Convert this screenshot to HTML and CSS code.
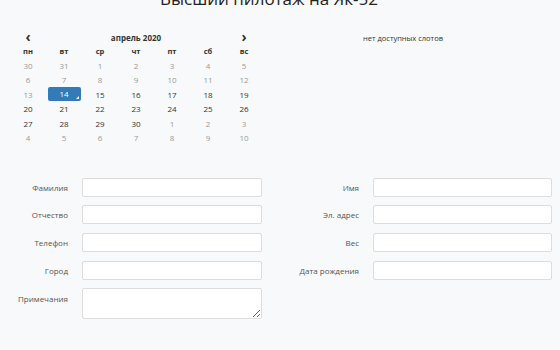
FILE: index.html
```html
<!DOCTYPE html>
<html lang="ru">
<head>
  <meta charset="UTF-8" />
  <title>Высший пилотаж на Як-52</title>
  <link rel="stylesheet" href="styles.css">
</head>
<body>
  <h1 class="title">Высший пилотаж на Як-52</h1>

  <div class="booking">
    <div class="calendar">
      <div class="cal-nav">
        <span class="cal-arrow">&#8249;</span>
        <span class="cal-month">апрель 2020</span>
        <span class="cal-arrow">&#8250;</span>
      </div>
      <div class="cal-grid">
        <span class="dow">пн</span><span class="dow">вт</span><span class="dow">ср</span><span class="dow">чт</span><span class="dow">пт</span><span class="dow">сб</span><span class="dow">вс</span>

        <span class="day off">30</span><span class="day off">31</span><span class="day off">1</span><span class="day off">2</span><span class="day off">3</span><span class="day off">4</span><span class="day off">5</span>
        <span class="day off">6</span><span class="day off">7</span><span class="day off">8</span><span class="day off">9</span><span class="day off">10</span><span class="day off">11</span><span class="day off">12</span>
        <span class="day off">13</span><span class="day selected">14</span><span class="day">15</span><span class="day">16</span><span class="day">17</span><span class="day">18</span><span class="day">19</span>
        <span class="day">20</span><span class="day">21</span><span class="day">22</span><span class="day">23</span><span class="day">24</span><span class="day">25</span><span class="day">26</span>
        <span class="day">27</span><span class="day">28</span><span class="day">29</span><span class="day">30</span><span class="day off">1</span><span class="day off">2</span><span class="day off">3</span>
        <span class="day off">4</span><span class="day off">5</span><span class="day off">6</span><span class="day off">7</span><span class="day off">8</span><span class="day off">9</span><span class="day off">10</span>
      </div>
    </div>
    <div class="slots">нет доступных слотов</div>
  </div>

  <form class="form">
    <label>Фамилия</label><input type="text" />
    <label>Имя</label><input type="text" />

    <label>Отчество</label><input type="text" />
    <label>Эл. адрес</label><input type="text" />

    <label>Телефон</label><input type="text" />
    <label>Вес</label><input type="text" />

    <label>Город</label><input type="text" />
    <label>Дата рождения</label><input type="text" />

    <label class="top">Примечания</label><textarea></textarea>
  </form>
</body>
</html>
```

FILE: styles.css
```css
* { box-sizing: border-box; }
body {
  margin: 0;
  padding: 0;
  background-color: #f8f9fa;
  font-family: 'Open Sans', sans-serif;
  color: #333;
  overflow: hidden;
}
.title {
  margin: -11px 0 0;
  font-size: 17px;
  line-height: 20px;
  font-weight: 400;
  text-align: center;
  color: #222;
  padding-right: 22px;
}

.booking { display: flex; margin-top: 21px; padding-left: 10px; }
.calendar { width: 252px; font-size: 8px; }
.cal-nav {
  display: flex; justify-content: space-between; align-items: center;
  height: 14px; font-weight: bold;
}
.cal-arrow { width: 36px; text-align: center; font-size: 14px; line-height: 14px; font-weight: bold; color: #333; }
.cal-month { font-size: 8px; }
.cal-grid {
  display: grid;
  grid-template-columns: repeat(7, 36px);
  grid-auto-rows: 14.4px;
  align-items: center;
  justify-items: center;
}
.dow { font-weight: bold; font-size: 7.5px; color: #333; }
.day { color: #333; }
.day.off { color: #999; }
.day.selected {
  position: relative;
  width: 33px; height: 14px; line-height: 14px; text-align: center;
  background-color: #337ab7; color: #fff; border-radius: 2px;
}
.day.selected::after {
  content: "";
  position: absolute; right: 2px; bottom: 2px;
  border-left: 3px solid transparent;
  border-bottom: 3px solid #fff;
}
.slots {
  flex: 1; text-align: center; font-size: 7.5px; color: #333;
  padding-top: 3px; padding-right: 16px;
}

.form {
  display: grid;
  grid-template-columns: 58px 180px 83px 179px;
  column-gap: 14px;
  row-gap: 8.7px;
  align-items: center;
  margin-top: 33px;
  padding-left: 10px;
  font-size: 8px;
}
.form label { text-align: right; color: #555; }
.form label.top { align-self: start; padding-top: 5px; }
.form input, .form textarea {
  height: 19px; margin: 0;
  background: #fff; border: 1px solid #ddd; border-radius: 2px;
  font-family: inherit; font-size: 8px;
}
.form textarea { height: 31px; resize: vertical; }
```
